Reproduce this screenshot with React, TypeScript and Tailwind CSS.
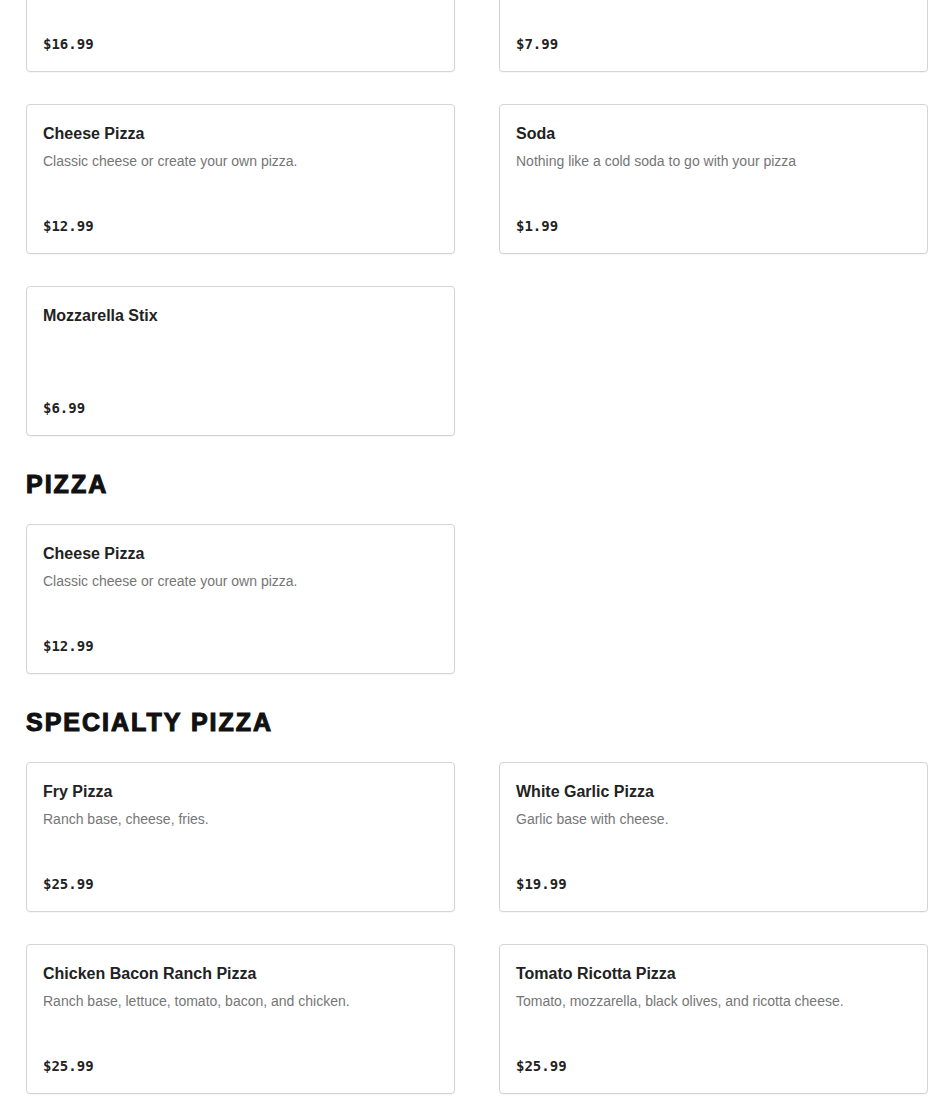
import React from "react";

type Item = { name?: string; desc?: string; price: string };

const sans = { fontFamily: "'Liberation Sans', Arial, sans-serif" };

const Card = ({ item }: { item: Item }) => (
  <div className="h-[150px] rounded-[4px] border border-[#d4d4d4] bg-white px-4 pt-[17px] pb-[15px] flex flex-col justify-between shadow-[0_1px_1px_rgba(0,0,0,0.04)]">
    <div>
      {item.name && (
        <div className="text-[16px] leading-6 font-bold text-[#222]" style={sans}>
          {item.name}
        </div>
      )}
      {item.desc && (
        <div className="mt-[5px] text-[14px] leading-5 text-[#767676]" style={sans}>
          {item.desc}
        </div>
      )}
    </div>
    <div className="text-[14px] leading-6 font-bold text-[#222]" style={{ fontFamily: "'DejaVu Sans Mono', monospace" }}>
      {item.price}
    </div>
  </div>
);

const Grid = ({ items }: { items: Item[] }) => (
  <div className="grid grid-cols-[429px_429px] gap-x-[44px] gap-y-8">
    {items.map((it, i) => (
      <Card key={i} item={it} />
    ))}
  </div>
);

const Heading = ({ children }: { children: React.ReactNode }) => (
  <h2
    className="mt-[33px] mb-[25px] text-[25px] leading-[30px] font-black tracking-[0.08em] text-[#111] [-webkit-text-stroke:1.1px_#111]"
    style={sans}
  >
    {children}
  </h2>
);

export default function App() {
  const first: Item[] = [
    { price: "$16.99" },
    { price: "$7.99" },
    { name: "Cheese Pizza", desc: "Classic cheese or create your own pizza.", price: "$12.99" },
    { name: "Soda", desc: "Nothing like a cold soda to go with your pizza", price: "$1.99" },
    { name: "Mozzarella Stix", price: "$6.99" },
  ];
  const pizza: Item[] = [
    { name: "Cheese Pizza", desc: "Classic cheese or create your own pizza.", price: "$12.99" },
  ];
  const specialty: Item[] = [
    { name: "Fry Pizza", desc: "Ranch base, cheese, fries.", price: "$25.99" },
    { name: "White Garlic Pizza", desc: "Garlic base with cheese.", price: "$19.99" },
    { name: "Chicken Bacon Ranch Pizza", desc: "Ranch base, lettuce, tomato, bacon, and chicken.", price: "$25.99" },
    { name: "Tomato Ricotta Pizza", desc: "Tomato, mozzarella, black olives, and ricotta cheese.", price: "$25.99" },
  ];
  return (
    <div className="bg-white min-h-[1116px] overflow-hidden">
      <div className="px-[26px] -mt-[78px] pb-10">
        <Grid items={first} />
        <Heading>PIZZA</Heading>
        <Grid items={pizza} />
        <Heading>SPECIALTY PIZZA</Heading>
        <Grid items={specialty} />
      </div>
    </div>
  );
}
